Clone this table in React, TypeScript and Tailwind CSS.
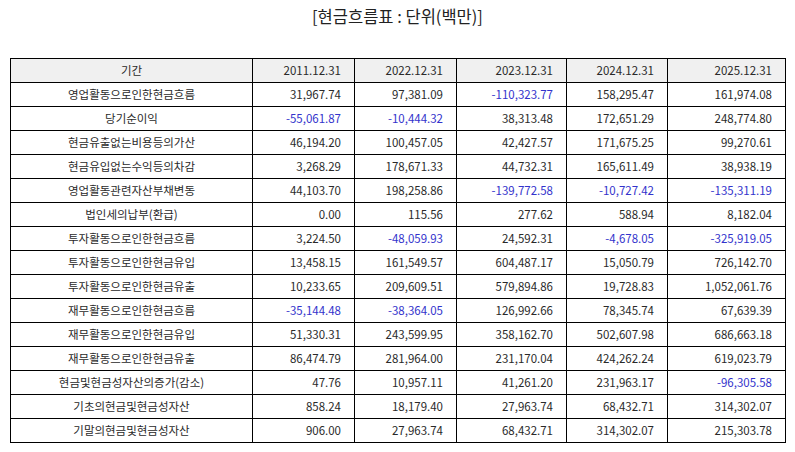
import React from "react";

const header = ["2011.12.31", "2022.12.31", "2023.12.31", "2024.12.31", "2025.12.31"];

const rows: [string, string[]][] = [
  ["영업활동으로인한현금흐름", ["31,967.74", "97,381.09", "-110,323.77", "158,295.47", "161,974.08"]],
  ["당기순이익", ["-55,061.87", "-10,444.32", "38,313.48", "172,651.29", "248,774.80"]],
  ["현금유출없는비용등의가산", ["46,194.20", "100,457.05", "42,427.57", "171,675.25", "99,270.61"]],
  ["현금유입없는수익등의차감", ["3,268.29", "178,671.33", "44,732.31", "165,611.49", "38,938.19"]],
  ["영업활동관련자산부채변동", ["44,103.70", "198,258.86", "-139,772.58", "-10,727.42", "-135,311.19"]],
  ["법인세의납부(환급)", ["0.00", "115.56", "277.62", "588.94", "8,182.04"]],
  ["투자활동으로인한현금흐름", ["3,224.50", "-48,059.93", "24,592.31", "-4,678.05", "-325,919.05"]],
  ["투자활동으로인한현금유입", ["13,458.15", "161,549.57", "604,487.17", "15,050.79", "726,142.70"]],
  ["투자활동으로인한현금유출", ["10,233.65", "209,609.51", "579,894.86", "19,728.83", "1,052,061.76"]],
  ["재무활동으로인한현금흐름", ["-35,144.48", "-38,364.05", "126,992.66", "78,345.74", "67,639.39"]],
  ["재무활동으로인한현금유입", ["51,330.31", "243,599.95", "358,162.70", "502,607.98", "686,663.18"]],
  ["재무활동으로인한현금유출", ["86,474.79", "281,964.00", "231,170.04", "424,262.24", "619,023.79"]],
  ["현금및현금성자산의증가(감소)", ["47.76", "10,957.11", "41,261.20", "231,963.17", "-96,305.58"]],
  ["기초의현금및현금성자산", ["858.24", "18,179.40", "27,963.74", "68,432.71", "314,302.07"]],
  ["기말의현금및현금성자산", ["906.00", "27,963.74", "68,432.71", "314,302.07", "215,303.78"]],
];

const colW = ["w-[242px]", "w-[102px]", "w-[102px]", "w-[110px]", "w-[101px]", "w-[118px]"];

export default function App() {
  return (
    <div
      className="w-[795px] h-[452px] bg-white px-[10px] text-[#2a2a2a]"
      style={{ fontFamily: '"Noto Sans CJK KR", "Noto Sans", sans-serif' }}
    >
      <div className="pt-[5px] h-[58px] text-center text-[16.5px] leading-[22px] text-[#222222]">
        [현금흐름표 : 단위(백만)]
      </div>
      <table className="w-[775px] border-collapse table-fixed text-[11.5px]">
        <colgroup>
          {colW.map((c, i) => (
            <col key={i} className={c} />
          ))}
        </colgroup>
        <thead>
          <tr className="bg-[#f0f0f0]">
            <th className="h-[24px] p-0 border border-black font-normal text-center leading-none">기간</th>
            {header.map((h) => (
              <th key={h} className="h-[24px] p-0 pr-[13px] border border-black font-normal text-right leading-none">
                {h}
              </th>
            ))}
          </tr>
        </thead>
        <tbody>
          {rows.map(([label, vals]) => (
            <tr key={label}>
              <td className="h-[24px] p-0 border border-black text-center leading-none">{label}</td>
              {vals.map((v, i) => (
                <td
                  key={i}
                  className={
                    v.startsWith("-")
                      ? "h-[24px] p-0 pr-[13px] border border-black text-right leading-none text-[#3333cc]"
                      : "h-[24px] p-0 pr-[13px] border border-black text-right leading-none"
                  }
                >
                  {v}
                </td>
              ))}
            </tr>
          ))}
        </tbody>
      </table>
    </div>
  );
}
